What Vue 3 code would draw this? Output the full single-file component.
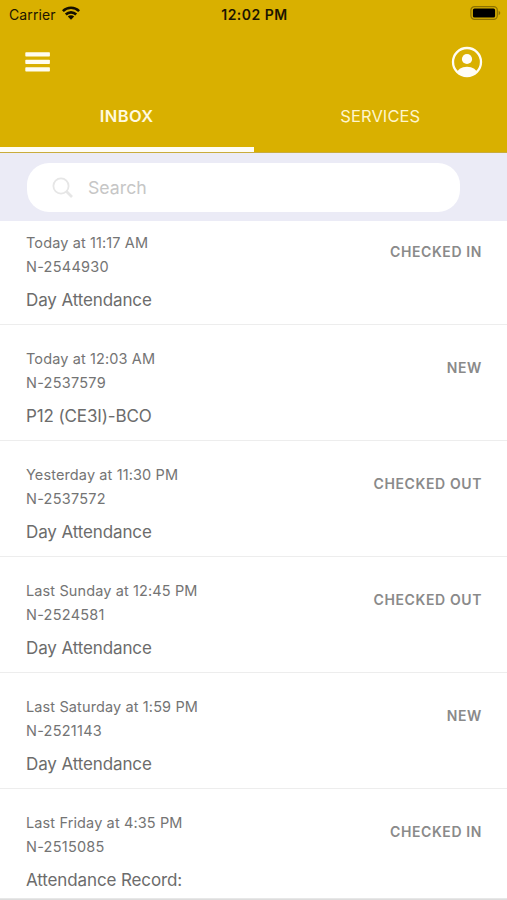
<script setup>
const items = [
  { date: 'Today at 11:17 AM', id: 'N-2544930', title: 'Day Attendance', status: 'CHECKED IN' },
  { date: 'Today at 12:03 AM', id: 'N-2537579', title: 'P12 (CE3I)-BCO', status: 'NEW' },
  { date: 'Yesterday at 11:30 PM', id: 'N-2537572', title: 'Day Attendance', status: 'CHECKED OUT' },
  { date: 'Last Sunday at 12:45 PM', id: 'N-2524581', title: 'Day Attendance', status: 'CHECKED OUT' },
  { date: 'Last Saturday at 1:59 PM', id: 'N-2521143', title: 'Day Attendance', status: 'NEW' },
  { date: 'Last Friday at 4:35 PM', id: 'N-2515085', title: 'Attendance Record:', status: 'CHECKED IN' },
]
</script>

<template>
  <div class="screen">
    <header class="header">
      <div class="status-bar">
        <div class="carrier">
          <span>Carrier</span>
          <svg width="18" height="14" viewBox="0 0 18 14">
            <g fill="none" stroke="#151000" stroke-width="2.6">
              <path d="M0.9 5.1a11.6 11.6 0 0 1 16.2 0" />
              <path d="M3.8 8.5a7.4 7.4 0 0 1 10.4 0" />
            </g>
            <path d="M9 13.8 5.8 10.6a4.5 4.5 0 0 1 6.4 0Z" fill="#151000" />
          </svg>
        </div>
        <div class="clock">12:02 PM</div>
        <svg class="battery" width="31" height="14" viewBox="0 0 31 14">
          <rect x="0.9" y="0.7" width="26.4" height="12.6" rx="3.6" fill="none" stroke="#8c7200" stroke-width="1.2" />
          <rect x="2.9" y="2.5" width="22.2" height="9" rx="1.6" fill="#000" />
          <path d="M28.6 4.8q1.7.7 1.7 2.2t-1.7 2.2Z" fill="#8c7200" />
        </svg>
      </div>
      <div class="toolbar">
        <svg width="25" height="20" viewBox="0 0 25 20" fill="#fffdf0">
          <rect x="0.3" y="0.3" width="24.6" height="4.1" rx="0.7" />
          <rect x="0.3" y="7.8" width="24.6" height="4.1" rx="0.7" />
          <rect x="0.3" y="15.3" width="24.6" height="4.1" rx="0.7" />
        </svg>
        <svg width="32" height="32" viewBox="0 0 32 32">
          <defs>
            <clipPath id="avatar"><circle cx="16" cy="16" r="14" /></clipPath>
          </defs>
          <circle cx="16" cy="16" r="14" fill="none" stroke="#fffdf5" stroke-width="2.3" />
          <circle cx="16" cy="13" r="5.1" fill="#fffdf5" />
          <ellipse cx="16" cy="28" rx="10.3" ry="7.3" fill="#fffdf5" clip-path="url(#avatar)" />
        </svg>
      </div>
      <nav class="tabs">
        <div class="tab active"><span>INBOX</span></div>
        <div class="tab"><span>SERVICES</span></div>
      </nav>
    </header>

    <div class="search-band">
      <div class="search">
        <svg width="22" height="22" viewBox="0 0 22 22" fill="none" stroke="#e6e6e6">
          <circle cx="9" cy="9" r="7.6" stroke-width="1.8" />
          <path d="M14.5 14.5 20 20" stroke-width="2.6" />
        </svg>
        <span>Search</span>
      </div>
    </div>

    <main class="list">
      <article v-for="item in items" :key="item.id" class="row">
        <div class="info">
          <div class="meta">{{ item.date }}</div>
          <div class="meta number">{{ item.id }}</div>
          <div class="title">{{ item.title }}</div>
        </div>
        <div class="status">{{ item.status }}</div>
      </article>
    </main>
    <div class="bottom-edge"></div>
  </div>
</template>

<style>
body {
  margin: 0;
  background: #fff;
}
</style>

<style scoped>
.screen {
  width: 507px;
  height: 900px;
  overflow: hidden;
  display: flex;
  flex-direction: column;
  background: #fff;
  font-family: Inter, "Liberation Sans", sans-serif;
}
.header {
  flex: none;
  height: 153px;
  box-sizing: border-box;
  background: #d9b000;
  border-bottom: 1px solid #c9ac3c;
  display: flex;
  flex-direction: column;
}
.status-bar {
  height: 28px;
  display: grid;
  grid-template-columns: 1fr auto 1fr;
  align-items: center;
  padding: 0 6px 0 9px;
  box-sizing: border-box;
  color: #1c1500;
}
.carrier {
  display: flex;
  align-items: center;
  gap: 6px;
  font-size: 14px;
  letter-spacing: 0.1px;
}
.carrier svg {
  margin-top: -2px;
}
.clock {
  font-size: 14px;
  font-weight: 600;
  letter-spacing: 0.5px;
  margin-right: 1px;
}
.battery {
  justify-self: end;
  margin-top: -2px;
}
.toolbar {
  height: 68px;
  box-sizing: border-box;
  display: flex;
  justify-content: space-between;
  align-items: center;
  padding: 0 24px 0 25px;
}
.tabs {
  flex: 1;
  display: flex;
}
.tab {
  flex: 1;
  box-sizing: border-box;
  padding-top: 8px;
  border-bottom: 5px solid transparent;
  text-align: center;
  font-size: 16.5px;
  letter-spacing: 0.1px;
  line-height: 24px;
  color: #fff6cc;
}
.tab.active {
  font-weight: 600;
  letter-spacing: 0.4px;
  color: #fffae0;
  border-bottom-color: #fffdf5;
}
.search-band {
  flex: none;
  height: 68px;
  box-sizing: border-box;
  padding: 10px 47px 9px 27px;
  background: #ebebf6;
}
.search {
  height: 49px;
  box-sizing: border-box;
  border-radius: 22px;
  background: #fff;
  display: flex;
  align-items: center;
  gap: 14px;
  padding-left: 25px;
  font-size: 17.7px;
  color: #c6c6c6;
}
.list {
  flex: 1;
  min-height: 0;
  overflow: hidden;
}
.row {
  height: 116px;
  box-sizing: border-box;
  border-bottom: 1px solid #ededed;
  padding: 22px 26px 0;
  display: flex;
  justify-content: space-between;
}
.row:first-child {
  height: 104px;
  padding-top: 10px;
}
.meta {
  font-size: 14.5px;
  line-height: 24px;
  letter-spacing: 0.12px;
  color: #747474;
}
.meta.number {
  letter-spacing: 0.25px;
}
.title {
  margin-top: 9px;
  font-size: 17px;
  line-height: 24px;
  letter-spacing: -0.12px;
  color: #6c6c6c;
}
.status {
  margin-top: 9px;
  font-size: 14px;
  line-height: 24px;
  font-weight: 600;
  letter-spacing: 0.6px;
  margin-right: -1px;
  color: #8a8a8a;
}
.bottom-edge {
  flex: none;
  height: 2px;
  background: linear-gradient(#ececec, #d8d8d8);
}
</style>
